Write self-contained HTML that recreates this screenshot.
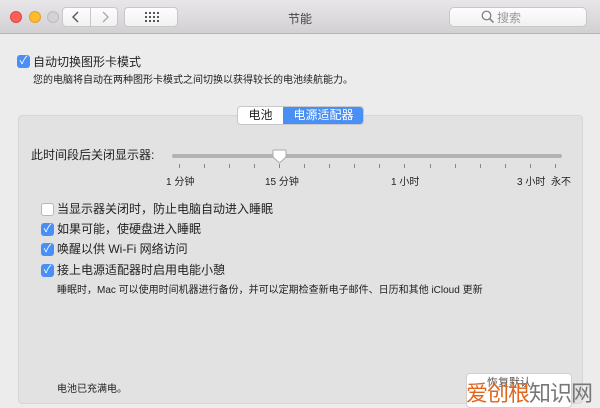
<!DOCTYPE html>
<html><head><meta charset="utf-8"><style>
*{margin:0;padding:0;box-sizing:border-box}
body{width:600px;height:408px;background:#ececec;font-family:"Liberation Sans","Noto Sans CJK SC",sans-serif;font-size:11px;color:#222;position:relative;overflow:hidden}
.tb{position:absolute;left:0;top:0;width:600px;height:34px;background:linear-gradient(#e8e6e8,#d2d0d2);border-bottom:1px solid #b5b3b5}
.dot{position:absolute;top:11px;width:12px;height:12px;border-radius:50%}
.btn{position:absolute;background:linear-gradient(#fdfdfd,#f1f1f1);border:1px solid #c8c8c8;border-radius:4px}
.a{position:absolute;white-space:nowrap}
.cb{position:absolute;width:13px;height:13px;border-radius:3px;background:#4a8ff5;color:#fff;font-size:11px;line-height:13px;text-align:center}
.cb.off{background:#fff;border:1px solid #b8b8b8}
.panel{position:absolute;left:18px;top:115px;width:565px;height:289px;background:#e2e2e2;border:1px solid #d6d6d6;border-radius:4px}
.tick{position:absolute;top:164px;width:1px;height:4px;background:#888}
</style></head><body>
<div class="tb">
<div class="dot" style="left:10px;background:#fc5f57;border:1px solid #de4540"></div>
<div class="dot" style="left:29px;background:#fdbc2e;border:1px solid #dea123"></div>
<div class="dot" style="left:47px;background:#d4d2d4;border:1px solid #bdbbbd"></div>
<div class="btn" style="left:62px;top:7px;width:56px;height:20px"></div>
<div class="a" style="left:90px;top:7px;width:1px;height:20px;background:#c8c8c8"></div>
<svg class="a" style="left:66px;top:9px" width="50" height="16"><path d="M12 3 L7 8 L12 13" stroke="#555" stroke-width="1.4" fill="none"/><path d="M37 3 L42 8 L37 13" stroke="#aaa" stroke-width="1.4" fill="none"/></svg>
<div class="btn" style="left:124px;top:7px;width:54px;height:20px"></div>
<svg class="a" style="left:145px;top:12px" width="14" height="10" fill="#555"><rect x="0" y="0" width="2" height="2"/><rect x="4" y="0" width="2" height="2"/><rect x="8" y="0" width="2" height="2"/><rect x="12" y="0" width="2" height="2"/><rect x="0" y="4" width="2" height="2"/><rect x="4" y="4" width="2" height="2"/><rect x="8" y="4" width="2" height="2"/><rect x="12" y="4" width="2" height="2"/><rect x="0" y="8" width="2" height="2"/><rect x="4" y="8" width="2" height="2"/><rect x="8" y="8" width="2" height="2"/><rect x="12" y="8" width="2" height="2"/></svg>
<div class="a" style="left:0;width:600px;top:10px;text-align:center;font-size:12px;color:#444">节能</div>
<div class="btn" style="left:449px;top:7px;width:138px;height:20px;border-radius:5px"></div>
<svg class="a" style="left:481px;top:10px" width="14" height="14"><circle cx="5.5" cy="5.5" r="4.3" stroke="#777" stroke-width="1.2" fill="none"/><path d="M8.7 8.7 L12.5 12.5" stroke="#777" stroke-width="1.4"/></svg>
<div class="a" style="left:497px;top:9px;font-size:12px;color:#999">搜索</div>
</div>
<div class="cb" style="left:17px;top:55px">✓</div>
<div class="a" style="left:33px;top:53px;font-size:12px">自动切换图形卡模式</div>
<div class="a" style="left:33px;top:71px;font-size:10px">您的电脑将自动在两种图形卡模式之间切换以获得较长的电池续航能力。</div>
<div class="panel"></div>
<div class="a" style="left:237px;top:106px;width:127px;height:19px;border:1px solid #c8c8c8;border-radius:4px;background:#fff;overflow:hidden">
<div class="a" style="left:0;top:0;width:45px;height:17px;text-align:center;font-size:12px;line-height:17px">电池</div>
<div class="a" style="left:45px;top:0;width:81px;height:17px;background:#4a8ff5;color:#fff;text-align:center;font-size:12px;line-height:17px">电源适配器</div>
</div>
<div class="a" style="left:31px;top:146px;font-size:12px">此时间段后关闭显示器:</div>
<div class="a" style="left:172px;top:154px;width:390px;height:4px;border-radius:2px;background:#b3b3b3"></div>
<svg class="a" style="left:272px;top:149px" width="15" height="15"><path d="M1 1.5 Q1 1 2 1 H13 Q14 1 14 2 V8 L7.5 14 L1 8 Z" fill="#fff" stroke="#aaa"/></svg>
<div class="tick" style="left:179px"></div><div class="tick" style="left:204px"></div><div class="tick" style="left:229px"></div><div class="tick" style="left:254px"></div><div class="tick" style="left:279px"></div><div class="tick" style="left:304px"></div><div class="tick" style="left:329px"></div><div class="tick" style="left:354px"></div><div class="tick" style="left:379px"></div><div class="tick" style="left:404px"></div><div class="tick" style="left:430px"></div><div class="tick" style="left:455px"></div><div class="tick" style="left:480px"></div><div class="tick" style="left:505px"></div><div class="tick" style="left:530px"></div><div class="tick" style="left:555px"></div>
<div class="a" style="left:166px;top:173px;font-size:10px">1 分钟</div>
<div class="a" style="left:265px;top:173px;font-size:10px">15 分钟</div>
<div class="a" style="left:391px;top:173px;font-size:10px">1 小时</div>
<div class="a" style="left:517px;top:173px;font-size:10px">3 小时</div>
<div class="a" style="left:551px;top:173px;font-size:10px">永不</div>
<div class="cb off" style="left:41px;top:203px"></div>
<div class="a" style="left:57px;top:200px;font-size:12px">当显示器关闭时，防止电脑自动进入睡眠</div>
<div class="cb" style="left:41px;top:223px">✓</div>
<div class="a" style="left:57px;top:220px;font-size:12px">如果可能，使硬盘进入睡眠</div>
<div class="cb" style="left:41px;top:243px">✓</div>
<div class="a" style="left:57px;top:240px;font-size:12px">唤醒以供 Wi-Fi 网络访问</div>
<div class="cb" style="left:41px;top:264px">✓</div>
<div class="a" style="left:57px;top:261px;font-size:12px">接上电源适配器时启用电能小憩</div>
<div class="a" style="left:57px;top:281px;font-size:10px">睡眠时，Mac 可以使用时间机器进行备份，并可以定期检查新电子邮件、日历和其他 iCloud 更新</div>
<div class="a" style="left:57px;top:380px;font-size:10px">电池已充满电。</div>
<div class="a" style="left:466px;top:373px;width:106px;height:35px;background:#fff;border-radius:4px;border:1px solid #d0d0d0"></div>
<div class="a" style="left:487px;top:374px;font-size:11px;color:#555">恢复默认</div>
<div class="a" style="left:466px;top:380px;font-size:22px;letter-spacing:-1px;line-height:28px"><span style="color:#e0661e">爱创根</span><span style="color:#777">知识网</span></div>
</body></html>
